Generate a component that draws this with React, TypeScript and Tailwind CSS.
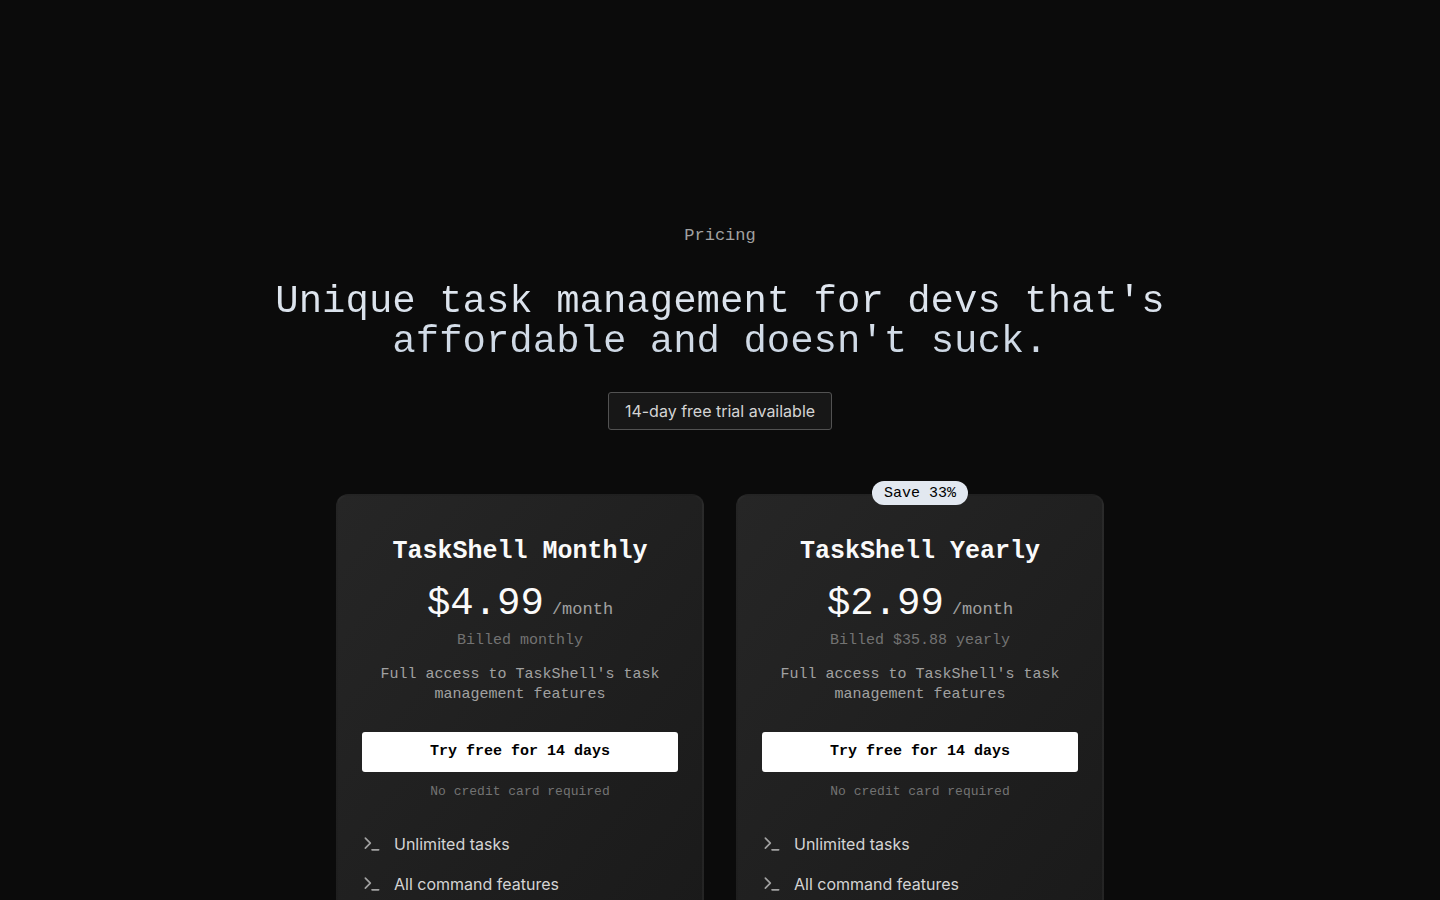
import React from "react";
import { Terminal } from "lucide-react";

type Plan = {
  name: string;
  price: string;
  billing: string;
  badge?: string;
};

const plans: Plan[] = [
  { name: "TaskShell Monthly", price: "$4.99", billing: "Billed monthly" },
  {
    name: "TaskShell Yearly",
    price: "$2.99",
    billing: "Billed $35.88 yearly",
    badge: "Save 33%",
  },
];

const features = ["Unlimited tasks", "All command features"];

const PlanCard = ({ plan }: { plan: Plan }) => {
  return (
    <article className="relative flex flex-col rounded-xl border-2 border-white/[0.02] bg-linear-to-br from-[#262626] to-[#1a1a1a] px-6 pt-10 pb-6">
      {plan.badge && (
        <span className="absolute -top-[15px] left-1/2 -translate-x-1/2 rounded-full bg-slate-200 px-3 pt-px font-['Liberation_Mono',monospace] text-[15px] leading-[23px] whitespace-nowrap text-black">
          {plan.badge}
        </span>
      )}
      {/* Header */}
      <header className="flex flex-col items-center text-center font-['Liberation_Mono',monospace]">
        <h2 className="text-[25px] leading-8 font-bold text-neutral-50">{plan.name}</h2>
        <p className="mt-4 flex items-baseline gap-2">
          <span className="text-[39px] leading-10 text-neutral-50">{plan.price}</span>
          <span className="text-[17px] leading-6 text-neutral-400">/month</span>
        </p>
        <p className="mt-[7px] text-[15px] leading-5 text-neutral-500">{plan.billing}</p>
        <p className="mt-3.5 text-[15px] leading-5 text-neutral-400">
          Full access to TaskShell's task management features
        </p>
      </header>
      {/* Action */}
      <button
        type="button"
        className="mt-[27px] h-10 w-full rounded-[3px] bg-white font-['Liberation_Mono',monospace] text-[15px] leading-5 font-semibold text-black"
      >
        Try free for 14 days
      </button>
      <p className="mt-3 text-center font-['Liberation_Mono',monospace] text-[13px] leading-4 text-neutral-500">
        No credit card required
      </p>
      {/* Features */}
      <ul className="mt-8 flex flex-col gap-4">
        {features.map((feature) => (
          <li key={feature} className="flex items-center gap-3 text-base text-neutral-300">
            <Terminal className="size-5 text-neutral-400" strokeWidth={2} />
            {feature}
          </li>
        ))}
      </ul>
    </article>
  );
};

const App = () => {
  return (
    <main className="h-screen overflow-hidden bg-[#0b0b0b] px-8 pt-56 font-[Inter,sans-serif]">
      <section className="mx-auto flex max-w-5xl flex-col items-center">
        <p className="font-['Liberation_Mono',monospace] text-[17px] leading-6 text-neutral-400">
          Pricing
        </p>
        <h1 className="mt-[34px] max-w-4xl bg-linear-to-b from-slate-200 to-slate-300 bg-clip-text text-center font-['Liberation_Mono',monospace] text-[39px] leading-10 text-transparent">
          Unique task management for devs that's affordable and doesn't suck.
        </h1>
        <p className="mt-[30px] rounded-[3px] border border-neutral-600 bg-neutral-900 px-4 py-1.5 text-base text-neutral-300">
          14-day free trial available
        </p>
      </section>
      {/* Plans */}
      <section className="mx-auto mt-16 grid max-w-3xl grid-cols-2 gap-8">
        {plans.map((plan) => (
          <PlanCard key={plan.name} plan={plan} />
        ))}
      </section>
    </main>
  );
};

export default App;
